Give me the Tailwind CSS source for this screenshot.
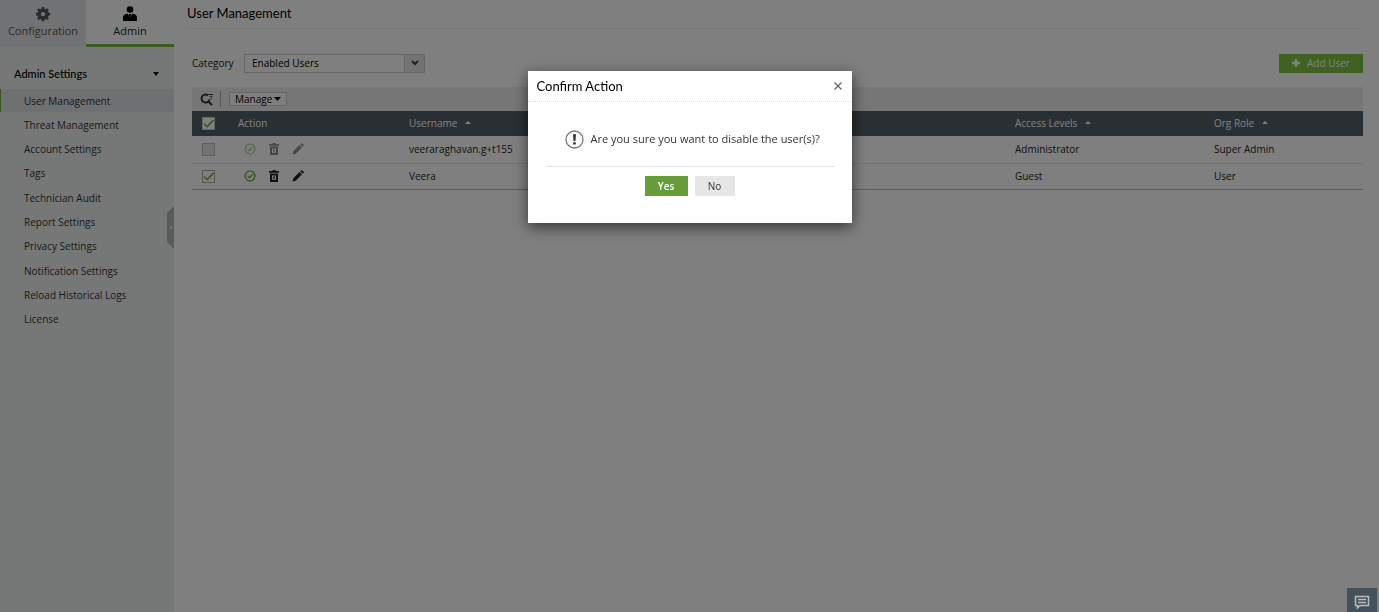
<!DOCTYPE html>
<html lang="en">
<head>
    <meta charset="UTF-8">
    <meta name="viewport" content="width=device-width, initial-scale=1.0">
    <title>User Management</title>
    <script src="https://cdn.jsdelivr.net/npm/@tailwindcss/browser@4"></script>
</head>
<body class="min-h-screen bg-white font-['Open_Sans',sans-serif] text-[10px] leading-4 text-[#222]">
    <div class="flex min-h-screen">
        <!-- Sidebar -->
        <aside class="relative w-[174px] shrink-0 bg-[#ecf0ee]">
            <nav class="flex h-[47px] text-center text-[11px]">
                <a href="#" class="flex w-[86px] flex-col items-center bg-[#e2e5e9] pt-1.5 text-[#555]">
                    <svg class="size-4" viewBox="0 0 16 16" fill="#555"><path fill-rule="evenodd" d="M6.700 1h2.600l.3 1.900 1 .4 1.600-1.100 1.700 1.700-1.100 1.600.4 1 1.900.3v2.600l-1.900.3-.4 1 1.100 1.600-1.700 1.700-1.600-1.100-1 .4-.3 1.900H6.700l-.3-1.900-1-.4-1.600 1.100-1.700-1.700 1.100-1.600-.4-1L.9 9.400V6.800l1.900-.3.4-1-1.100-1.600 1.700-1.700 1.600 1.100 1-.4zM8 5.900a2.200 2.200 0 1 0 0 4.400 2.200 2.200 0 0 0 0-4.400z"/></svg>
                    <span class="mt-px">Configuration</span>
                </a>
                <a href="#" class="flex grow flex-col items-center border-b-3 border-[#74bd3c] bg-white pt-1.5 text-[#222]">
                    <svg class="size-4" viewBox="0 0 16 16" fill="#000"><circle cx="8" cy="3.500" r="3.300"/><path d="M1 15v-3.500C1 9 3.500 8 5.500 7.600L8 11l2.500-3.400C12.500 8 15 9 15 11.500V15z"/><path d="M7.200 8h1.600l.5 1L8 11 6.700 9z"/></svg>
                    <span class="mt-px">Admin</span>
                </a>
            </nav>
            <div class="mt-[18px] flex h-[18px] items-center justify-between pr-[15px] pl-3.5 font-['Lato',sans-serif] text-[11px] font-medium text-black">
                Admin Settings
                <svg class="h-1 w-1.5" viewBox="0 0 6 4"><path d="M0 0h6L3 4z"/></svg>
            </div>
            <ul class="mt-1.5 flex h-[242px] flex-col justify-between text-[#333]">
                <li><a href="#" class="flex h-[23px] items-center border-l border-[#6cb52d] bg-[#dde0e4] pl-[23px]">User Management</a></li>
                <li><a href="#" class="flex h-[23px] items-center pl-6">Threat Management</a></li>
                <li><a href="#" class="flex h-[23px] items-center pl-6">Account Settings</a></li>
                <li><a href="#" class="flex h-[23px] items-center pl-6">Tags</a></li>
                <li><a href="#" class="flex h-[23px] items-center pl-6">Technician Audit</a></li>
                <li><a href="#" class="flex h-[23px] items-center pl-6">Report Settings</a></li>
                <li><a href="#" class="flex h-[23px] items-center pl-6">Privacy Settings</a></li>
                <li><a href="#" class="flex h-[23px] items-center pl-6">Notification Settings</a></li>
                <li><a href="#" class="flex h-[23px] items-center pl-6">Reload Historical Logs</a></li>
                <li><a href="#" class="flex h-[23px] items-center pl-6">License</a></li>
            </ul>
            <button type="button" aria-label="Collapse sidebar" class="absolute top-[206px] right-0">
                <svg class="h-[43px] w-[7px]" viewBox="0 0 7 43"><path d="M7 0v43L0 36V7z" fill="#b1b6b8"/><path d="M5 19.500v4L2.500 21.500z" fill="#fff"/></svg>
            </button>
        </aside>

        <!-- Main content -->
        <main class="min-w-0 grow pr-4 pl-[18px]">
            <h1 class="-ml-[5px] flex h-[29px] items-center border-b border-[#eee] pb-0.5 font-['Lato',sans-serif] text-[13px] font-normal text-black">User Management</h1>
            <div class="mt-6 flex h-5 items-center">
                <label for="category" class="w-[52px]">Category</label>
                <div class="relative h-[19px] w-[181px]">
                    <select id="category" class="block h-full w-full appearance-none border border-[#ccc] bg-white pl-[7px] text-black">
                        <option>Enabled Users</option>
                        <option>Disabled Users</option>
                    </select>
                    <span class="pointer-events-none absolute inset-y-0 right-0 flex w-[21px] items-center justify-center border border-[#ccc] bg-[#e6e6e6]">
                        <svg class="h-1.5 w-2" viewBox="0 0 8 6" fill="none" stroke="#444" stroke-width="2"><path d="M1 1l3 3 3-3"/></svg>
                    </span>
                </div>
                <button type="button" class="ml-auto flex h-[19px] w-[84px] items-center justify-center gap-[7px] bg-[#7fc547] text-white">
                    <svg class="size-2" viewBox="0 0 8 8" fill="#fff"><path d="M2.700 0h2.600v2.700H8v2.600H5.300V8H2.700V5.300H0V2.700h2.700z"/></svg>
                    Add User
                </button>
            </div>

            <div class="mt-3.5 flex h-6 items-center bg-[#efefef] pl-2">
                <button type="button" aria-label="Search">
                    <svg class="size-3.5" viewBox="0 0 14 14" fill="none" stroke="#333"><path d="M8 3.400A4 4 0 1 0 9.400 7.500" stroke-width="1.900"/><path d="M8 9l4 4" stroke-width="2.200"/><path d="M8.500 2.500H13M9.500 4.800h3M10.500 7H12" stroke-width="1.100"/></svg>
                </button>
                <span class="mx-2 ml-1.5 h-4 w-px bg-[#aaa]"></span>
                <button type="button" class="flex h-3.5 items-center gap-0.5 border border-[#ccc] bg-white px-[5px] text-black">
                    Manage
                    <svg class="h-1 w-[7px]" viewBox="0 0 7 4"><path d="M0 0h7L3.500 4z"/></svg>
                </button>
            </div>
            <table class="w-full table-fixed text-left">
                <colgroup>
                    <col class="w-[46px]">
                    <col class="w-[171px]">
                    <col>
                    <col class="w-[17%]">
                    <col class="w-[149px]">
                </colgroup>
                <thead class="bg-[#545f67] text-white">
                    <tr class="h-[25px]">
                        <th class="pl-2.5">
                            <span class="relative block size-[13px]">
                                <input type="checkbox" checked aria-label="Select all" class="peer block size-[13px] appearance-none border border-[#ccc] bg-white">
                                <svg class="pointer-events-none invisible absolute inset-0 peer-checked:visible" viewBox="0 0 13 13" fill="none" stroke="#6cb52d" stroke-width="1.700"><path d="M2 6.500l3.200 3L11.500 3"/></svg>
                            </span>
                        </th>
                        <th class="pb-0.5 font-normal">Action</th>
                        <th class="pb-0.5 font-normal"><span class="flex items-center gap-2">Username <svg class="h-[3px] w-1.5" viewBox="0 0 6 3" fill="#fff"><path d="M0 3h6L3 0z"/></svg></span></th>
                        <th class="pb-0.5 font-normal"><span class="flex items-center gap-2">Access Levels <svg class="h-[3px] w-1.5" viewBox="0 0 6 3" fill="#fff"><path d="M0 3h6L3 0z"/></svg></span></th>
                        <th class="pb-0.5 font-normal"><span class="flex items-center gap-2">Org Role <svg class="h-[3px] w-1.5" viewBox="0 0 6 3" fill="#fff"><path d="M0 3h6L3 0z"/></svg></span></th>
                    </tr>
                </thead>
                <tbody>
                    <tr class="h-[27px] border-b border-[#e6e6e6]">
                        <td class="pl-2.5">
                            <input type="checkbox" disabled aria-label="Select veeraraghavan.g+t155" class="block size-[13px] appearance-none border border-[#bbb] bg-[#e6e6e6]">
                        </td>
                        <td>
                            <div class="flex items-center gap-3 pl-1.5 opacity-50">
                                <button type="button" disabled aria-label="Disable user"><svg class="size-3" viewBox="0 0 12 12" fill="none" stroke="#6fbb3c"><circle cx="6" cy="6" r="4.900" stroke-width="1.500"/><path d="M3.500 5.800l2 2L9 4" stroke-width="1.400"/></svg></button>
                                <button type="button" disabled aria-label="Delete user"><svg class="size-3" viewBox="0 0 12 12" fill="#222"><path d="M4.500 0h3v1H11v1.700H1V1h3.500z"/><path fill-rule="evenodd" d="M2 3.500h8V12H2zM4 5.500v4.300h4V5.500zM5.200 6.500h1.600v2.300H5.200z"/></svg></button>
                                <button type="button" disabled aria-label="Edit user"><svg class="size-3" viewBox="0 0 12 12" fill="#222"><path d="M.5 11.500l.8-3.200L7.500 2l2.400 2.400-6.200 6.300zM8.200 1.300L9 .5q.7-.6 1.400 0l1.100 1.100q.5.700 0 1.300l-.9.800z"/></svg></button>
                            </div>
                        </td>
                        <td>veeraraghavan.g+t155</td>
                        <td>Administrator</td>
                        <td>Super Admin</td>
                    </tr>
                    <tr class="h-[26px] border-b border-[#bbb]">
                        <td class="pl-2.5">
                            <span class="relative block size-[13px]">
                                <input type="checkbox" checked aria-label="Select Veera" class="peer block size-[13px] appearance-none border border-[#aaa] bg-white">
                                <svg class="pointer-events-none invisible absolute inset-0 peer-checked:visible" viewBox="0 0 13 13" fill="none" stroke="#6cb52d" stroke-width="1.700"><path d="M2 6.500l3.200 3L11.500 3"/></svg>
                            </span>
                        </td>
                        <td>
                            <div class="flex items-center gap-3 pl-1.5">
                                <button type="button" aria-label="Disable user"><svg class="size-3" viewBox="0 0 12 12" fill="none" stroke="#6fbb3c"><circle cx="6" cy="6" r="4.900" stroke-width="1.500"/><path d="M3.500 5.800l2 2L9 4" stroke-width="1.400"/></svg></button>
                                <button type="button" aria-label="Delete user"><svg class="size-3" viewBox="0 0 12 12" fill="#222"><path d="M4.500 0h3v1H11v1.700H1V1h3.500z"/><path fill-rule="evenodd" d="M2 3.500h8V12H2zM4 5.500v4.300h4V5.500zM5.200 6.500h1.600v2.300H5.200z"/></svg></button>
                                <button type="button" aria-label="Edit user"><svg class="size-3" viewBox="0 0 12 12" fill="#222"><path d="M.5 11.500l.8-3.200L7.500 2l2.400 2.400-6.200 6.300zM8.200 1.300L9 .5q.7-.6 1.400 0l1.100 1.100q.5.700 0 1.300l-.9.800z"/></svg></button>
                            </div>
                        </td>
                        <td>Veera</td>
                        <td>Guest</td>
                        <td>User</td>
                    </tr>
                </tbody>
            </table>
        </main>
    </div>

    <!-- Confirm dialog -->
    <div class="fixed inset-0 flex items-start justify-center bg-black/50 pt-[71px] text-[11px]">
        <div role="dialog" aria-modal="true" aria-labelledby="dialogTitle" class="w-[324px] bg-white pb-[27px] shadow-[0_4px_14px_rgba(0,0,0,0.6)]">
            <div class="flex h-[31px] items-center justify-between border-b border-dotted border-[#ddd] px-[9px]">
                <h2 id="dialogTitle" class="font-['Lato',sans-serif] text-[13px] font-normal text-black">Confirm Action</h2>
                <button type="button" aria-label="Close">
                    <svg class="size-2.5" viewBox="0 0 10 10" fill="none" stroke="#666" stroke-width="1.300"><path d="M1.500 1.500l7 7M8.500 1.500l-7 7"/></svg>
                </button>
            </div>
            <div class="mx-[18px] flex h-[65px] items-center gap-[7px] border-b border-[#e3e3e3] pt-2.5 pl-[19px] text-[#333]">
                <svg class="size-[19px]" viewBox="0 0 19 19"><circle cx="9.500" cy="9.500" r="8.500" fill="none" stroke="#777" stroke-width="1.300"/><path d="M8 4.300h3l-.5 6.700h-2zM8.200 12.300h2.600v2.200H8.200z" fill="#333"/></svg>
                <p>Are you sure you want to disable the user(s)?</p>
            </div>
            <div class="mt-[9px] flex justify-center gap-[7px]">
                <button type="button" class="h-5 w-[43px] bg-[#669c3a] text-[10px] font-semibold text-white">Yes</button>
                <button type="button" class="h-5 w-10 bg-[#e6e6e6] text-[10px] text-[#333]">No</button>
            </div>
        </div>
    </div>

    <!-- Chat -->
    <button type="button" aria-label="Chat" class="fixed right-0.5 bottom-0 flex h-6 w-[30px] items-center justify-center bg-[#43525c] pt-1">
        <svg class="h-[15px] w-4" viewBox="0 0 16 15" fill="none" stroke="#bbb" stroke-width="1.500"><path d="M1.500 1.500h13v9H6L3.500 13v-2.500h-2zM4 4.500h8M4 7.500h8"/></svg>
    </button>
</body>
</html>
